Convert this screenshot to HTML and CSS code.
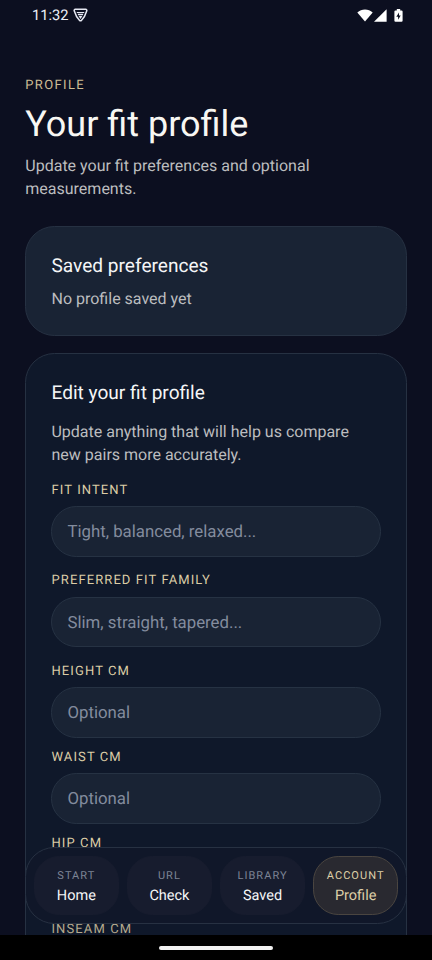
FILE: index.html
```
<!DOCTYPE html>
<html lang="en">
<head>
<meta charset="utf-8">
<title>Your fit profile</title>
<link rel="stylesheet" href="styles.css">
</head>
<body>
<div class="screen">
  <header class="status">
    <span class="clock">11:32</span>
    <svg class="shield" width="15" height="14" viewBox="0 0 15 14" fill="none" stroke="#e6e8f2" stroke-linejoin="round">
      <path d="M2.400 1.200h10.200a1.200 1.200 0 0 1 1.100 1.800c-1 3.600-2.600 6.600-5.300 9.400a1.250 1.250 0 0 1-1.800 0C3.900 9.600 2.300 6.600 1.300 3a1.200 1.200 0 0 1 1.100-1.800z" stroke-width="1.500"/>
      <path d="M3.800 3.900h7.400v1.100H3.800zM4.700 5.700h5.600L9.900 7.300H5.100zM5.600 8h3.800L7.500 10.900z" fill="#e6e8f2" stroke="none"/>
    </svg>
    <span class="spacer"></span>
    <svg class="wifi" width="16" height="13" viewBox="0 0 16 13"><path d="M8 12.600.3 3.500C2.500 1.400 5.100.4 8 .4s5.500 1 7.700 3.100z" fill="#fff"/></svg>
    <svg class="signal" width="13" height="13" viewBox="0 0 13 13"><path d="M12.600.2v12.600H0z" fill="#fff"/></svg>
    <svg class="battery" width="9" height="13" viewBox="0 0 9 13"><path d="M2.800 0h3.400v1.400h1.300a1.100 1.100 0 0 1 1.100 1.100v9.200a1.100 1.100 0 0 1-1.100 1.100h-6A1.100 1.100 0 0 1 .4 11.700V2.500a1.100 1.100 0 0 1 1.100-1.100h1.300z" fill="#fff"/><path d="M5 3.400 2.300 7.800h1.800v3L6.700 6.400H5z" fill="#0b0e1f"/></svg>
  </header>

  <main class="content">
    <p class="eyebrow">PROFILE</p>
    <h1 class="title">Your fit profile</h1>
    <p class="body lead">Update your fit preferences and optional measurements.</p>

    <section class="card saved">
      <h2 class="heading">Saved preferences</h2>
      <p class="body">No profile saved yet</p>
    </section>

    <section class="card edit">
      <h2 class="heading">Edit your fit profile</h2>
      <p class="body">Update anything that will help us compare new pairs more accurately.</p>
      <form class="form">
        <label class="field wide"><span class="label">FIT INTENT</span><span class="input">Tight, balanced, relaxed...</span></label>
        <label class="field wide"><span class="label">PREFERRED FIT FAMILY</span><span class="input">Slim, straight, tapered...</span></label>
        <label class="field"><span class="label">HEIGHT CM</span><span class="input">Optional</span></label>
        <label class="field"><span class="label">WAIST CM</span><span class="input">Optional</span></label>
        <label class="field"><span class="label">HIP CM</span><span class="input"></span></label>
        <label class="field"><span class="label dim">INSEAM CM</span><span class="input"></span></label>
      </form>
    </section>
  </main>

  <nav class="tabs">
    <a class="tab"><span class="kicker">START</span><span class="name">Home</span></a>
    <a class="tab"><span class="kicker">URL</span><span class="name">Check</span></a>
    <a class="tab"><span class="kicker">LIBRARY</span><span class="name">Saved</span></a>
    <a class="tab active"><span class="kicker">ACCOUNT</span><span class="name">Profile</span></a>
  </nav>
  <footer class="system"><span class="handle"></span></footer>
</div>
</body>
</html>
```
FILE: styles.css
```
* { box-sizing: border-box; }
body { margin: 0; background: #0c0f20; font-family: Roboto, sans-serif; text-rendering: geometricPrecision; }
h1, h2, p { margin: 0; font-weight: 400; }

.screen {
  position: relative;
  width: 432px;
  height: 960px;
  overflow: hidden;
  background: #0c0f20;
}

.status { display: flex; height: 30px; padding: 0 29.500px 0 32px; align-items: center; }
.clock { font-size: 14.700px; color: #eceef6; line-height: 30px; }
.shield { margin-left: 4px; }
.spacer { flex: 1; }
.wifi { margin-right: 1px; }
.battery { margin-left: 7px; }

.content { padding: 47px 25.300px 0; }
.eyebrow, .label { font-size: 13px; line-height: 17px; letter-spacing: 1.100px; color: #dccda6; }
.eyebrow { letter-spacing: 1.350px; color: #cdbd95; }
.title { margin-top: 8px; font-size: 36px; line-height: 44px; color: #f8f7f3; }
.body { font-size: 16px; line-height: 23.100px; color: #bcbdbf; }
.lead { margin-top: 8px; }

.card { border: 1px solid #263142; border-radius: 29.400px; padding: 26.500px 25.200px; }
.heading { font-size: 19.100px; line-height: 26px; color: #f5f6f7; }
.saved { height: 110px; margin-top: 25.400px; background: #192334; }
.saved .body { margin-top: 8px; }
.edit { margin-top: 17px; background: #0f182a; height: 700px; }
.edit .body { margin-top: 14px; }

.form { display: flex; flex-direction: column; margin-top: 15.700px; gap: 11.300px; }
.field { display: flex; flex-direction: column; gap: 7.400px; }
.wide { margin-bottom: 4.200px; }
.label.dim { color: #b5aa8e; }
.input {
  height: 50.500px;
  padding-left: 15px;
  border: 1px solid #263243;
  border-radius: 25.200px;
  background: #192334;
  color: #838c9e;
  font-size: 16.800px;
  line-height: 51px;
}

.tabs {
  position: absolute;
  left: 25px;
  top: 847px;
  width: 382px;
  height: 77px;
  display: grid;
  grid-template-columns: repeat(4, 1fr);
  gap: 8.400px;
  padding: 8px 8px;
  border: 1px solid #273142;
  border-radius: 29.400px;
  background: #101729;
}
.tab {
  display: flex;
  flex-direction: column;
  align-items: center;
  padding-top: 11px;
  border: 1px solid #171c2e;
  border-radius: 25.200px;
  background: #171c2e;
}
.kicker { font-size: 11px; line-height: 15px; letter-spacing: 1.050px; color: #7d8495; }
.name { margin-top: 3.500px; font-size: 14.500px; line-height: 18px; color: #f5f6f7; }
.active { background: #292930; border-color: #4a4540; }
.active .kicker, .active .name { color: #decfa8; }

.system {
  position: absolute;
  left: 0;
  right: 0;
  bottom: 0;
  height: 25px;
  display: flex;
  justify-content: center;
  align-items: center;
  background: #000;
}
.handle { width: 114px; height: 4px; border-radius: 2px; background: #f2f2f2; }
```
